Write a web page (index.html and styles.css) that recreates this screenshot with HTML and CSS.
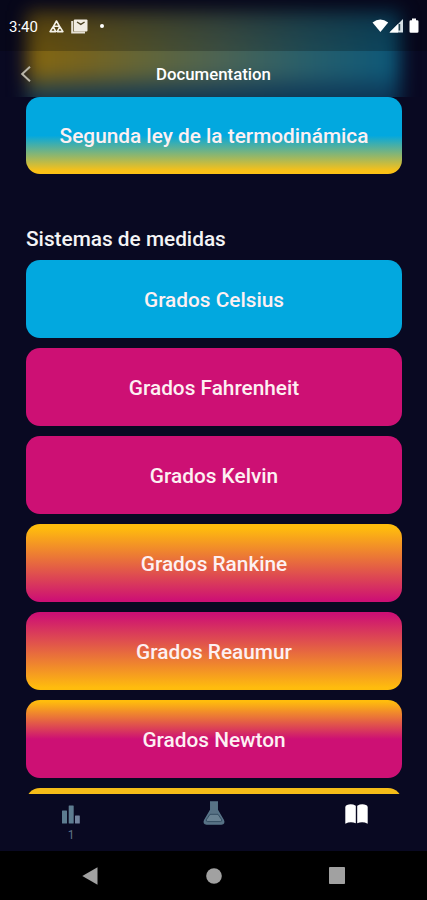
FILE: index.html
```
<!DOCTYPE html>
<html lang="es">
<head>
    <meta charset="UTF-8">
    <meta name="viewport" content="width=device-width, initial-scale=1.0">
    <title>Documentation</title>
    <link rel="stylesheet" href="styles.css">
</head>
<body>
    <div class="screen">
        <div class="top">
            <div class="glow"></div>
            <div class="status-bar">
                <span class="clock">3:40</span>
                <svg class="status-app" width="15" height="13" viewBox="0 0 15 13" fill="none" stroke="#f4f1e8" stroke-width="1.6" stroke-linejoin="round">
                    <path d="M7.5 1 L10.4 6.2 H4.6 Z M4.2 6.6 L1.1 11.6 H6.8 Z M10.8 6.6 L13.9 11.6 H8.2 Z"/>
                </svg>
                <svg class="status-mail" width="17" height="15" viewBox="0 0 17 15">
                    <path d="M1.2 2 V13.6 H14" fill="none" stroke="#e6e1d5" stroke-width="2"/>
                    <rect x="2.8" y="0.5" width="13.7" height="12" rx="1" fill="#f1ece2"/>
                    <path d="M6 3 L9.8 5.4 L13.6 3" fill="none" stroke="#4b4020" stroke-width="1.3"/>
                </svg>
                <span class="dot"></span>
                <svg class="status-signals" width="48" height="16" viewBox="0 0 48 16">
                    <path d="M0.5 4.5 Q8.3 -1.5 16.2 4.5 L8.4 14 Z" fill="#fff"/>
                    <path d="M17.5 14.5 L31 1 V14.5 Z" fill="#d5dfe5"/>
                    <path d="M17.5 14.5 L26 6 V14.5 Z" fill="#fff"/>
                    <path d="M27.4 6 V12.5" stroke="#24404c" stroke-width="1.6"/>
                    <path d="M40 0.5 h4 v1.7 h1.2 q1.3 0 1.3 1.3 v10 q0 1.3 -1.3 1.3 h-6.4 q-1.3 0 -1.3 -1.3 v-10 q0 -1.3 1.3 -1.3 h1.2 z" fill="#fff"/>
                </svg>
            </div>
            <div class="header">
                <svg class="back" width="12" height="18" viewBox="0 0 12 18">
                    <path d="M10 1.8 L2.2 9 L10 16.2" fill="none" stroke="#b9b5a8" stroke-width="2"/>
                </svg>
                <div class="title">Documentation</div>
            </div>
        </div>
        <div class="content">
            <div class="card blue-yellow">Segunda ley de la termodinámica</div>
            <h2>Sistemas de medidas</h2>
            <div class="list">
                <div class="card blue">Grados Celsius</div>
                <div class="card pink">Grados Fahrenheit</div>
                <div class="card pink">Grados Kelvin</div>
                <div class="card yellow-pink">Grados Rankine</div>
                <div class="card pink-yellow">Grados Reaumur</div>
                <div class="card half-pink">Grados Newton</div>
                <div class="card yellow"></div>
            </div>
        </div>
        <div class="tabs">
            <div class="tab">
                <svg width="20" height="20" viewBox="0 0 20 20" fill="#5d7c90">
                    <rect x="1" y="6.5" width="5" height="13" rx="0.5"/>
                    <rect x="7.7" y="1.5" width="5" height="18" rx="0.5"/>
                    <rect x="14" y="11.5" width="4.8" height="8" rx="0.5" fill="#73839d"/>
                </svg>
                <span class="count">1</span>
            </div>
            <div class="tab">
                <svg class="flask" width="22" height="24" viewBox="0 0 22 24">
                    <path d="M7 1 H15 M7.8 1 V9 L1.7 19.4 Q0.3 22.8 3.6 23 H18.4 Q21.7 22.8 20.3 19.4 L14.2 9 V1" fill="#587285" stroke="#587488" stroke-width="1.5"/>
                    <path d="M7 13.3 H15 L18.5 18.4 Q19.6 20.6 17.3 20.6 H4.7 Q2.4 20.6 3.5 18.4 Z" fill="#698293" stroke="#30495d" stroke-width="0.9"/>
                </svg>
            </div>
            <div class="tab">
                <svg class="book" width="23" height="21" viewBox="0 0 23 21" fill="#fff">
                    <path d="M0.3 3 Q0.5 1.5 2 1 Q6.5 -0.6 10.8 1.8 V19.3 Q5.5 17.2 0.3 19.7 Z"/>
                    <path d="M12.2 1.8 Q16.5 -0.6 21 1 Q22.5 1.5 22.7 3 V19.7 Q17.5 17.2 12.2 19.3 Z"/>
                </svg>
            </div>
        </div>
        <div class="nav">
            <svg width="16" height="18" viewBox="0 0 16 18"><path d="M0.3 9 L15.5 0.3 V17.7 Z" fill="#a1a1a1"/></svg>
            <svg width="16" height="16" viewBox="0 0 16 16"><circle cx="8" cy="8" r="7.8" fill="#a1a1a1"/></svg>
            <svg width="16" height="17" viewBox="0 0 16 17"><rect width="16" height="17" rx="0.8" fill="#a1a1a1"/></svg>
        </div>
    </div>
</body>
</html>
```
FILE: styles.css
```
* {
    box-sizing: border-box;
}
body {
    margin: 0;
    font-family: Roboto, sans-serif;
    font-weight: 500;
    color: #fff;
    background: #090922;
}
.screen {
    display: flex;
    flex-direction: column;
    height: 900px;
    overflow: hidden;
}
.top {
    position: relative;
    height: 97px;
    overflow: hidden;
}
/* soft colour of the card that scrolls behind the bar */
.glow {
    position: absolute;
    left: 27px;
    right: 27px;
    top: 11px;
    height: 100px;
    background: linear-gradient(180deg, rgba(9, 9, 34, 0.25), transparent 40%, transparent 60%, rgba(12, 52, 85, 0.9) 84%),
        linear-gradient(90deg, #86670f 0%, #77641f 15%, #636639 32%, #4c6454 52%, #285f6b 75%, #0b587a 100%);
    filter: blur(9px);
}
.status-bar {
    position: relative;
    display: flex;
    height: 51px;
    padding: 0 7px 0 9px;
    align-items: center;
    background: rgba(0, 0, 0, 0.22);
}
.clock {
    width: 40px;
    font-size: 15px;
    font-weight: 400;
    padding-top: 2px;
}
.status-app {
    margin-top: 2px;
}
.status-mail {
    margin: 2px 0 0 7px;
}
.dot {
    width: 4px;
    height: 4px;
    margin-left: 12px;
    border-radius: 50%;
    background: #fff;
}
.status-signals {
    margin-left: auto;
    margin-top: 1px;
}
.header {
    position: relative;
    display: grid;
    grid-template-columns: 40px 1fr 40px;
    align-items: center;
    height: 46px;
}
.back {
    margin-left: 20px;
}
.title {
    font-size: 16.8px;
    line-height: 20px;
    text-align: center;
}
.content {
    height: 697px;
    padding: 0 25px 0 26px;
    overflow: hidden;
}
h2 {
    height: 86px;
    margin: 0;
    padding-top: 53px;
    font-size: 20.8px;
    line-height: 24px;
    font-weight: 500;
    color: #f4f4f6;
}
.list {
    display: flex;
    flex-direction: column;
    gap: 10.2px;
}
.card {
    flex-shrink: 0;
    height: 77.8px;
    line-height: 80px;
    border-radius: 14px;
    text-align: center;
    font-size: 20.8px;
    color: #fdf0f2;
}
.blue-yellow {
    height: 77px;
    line-height: 78px;
    background: linear-gradient(#02a8df 50%, #fbc116 96%);
}
.blue {
    background: #02a8df;
}
.pink {
    background: #cd1074;
}
.yellow-pink {
    background: linear-gradient(#ffbc0d 5%, #cd1074 98%);
}
.pink-yellow {
    background: linear-gradient(#cd1074 3%, #ffbc0d 97%);
}
.half-pink {
    background: linear-gradient(#ffbc0d 2%, #cd1074 50%);
}
.yellow {
    background: #f5bc18;
}
.tabs {
    display: flex;
    height: 57px;
}
.tab {
    display: flex;
    flex: 1;
    flex-direction: column;
    align-items: center;
    padding-top: 10px;
}
.count {
    margin-top: 4px;
    font-size: 12px;
    line-height: 14px;
    font-weight: 400;
    color: #5d7287;
}
.flask {
    margin: -3px 0 0 1px;
}
.book {
    margin-left: 1px;
}
.nav {
    display: flex;
    height: 49px;
    align-items: center;
    justify-content: space-between;
    padding: 0 82px;
    background: #000;
}
```
